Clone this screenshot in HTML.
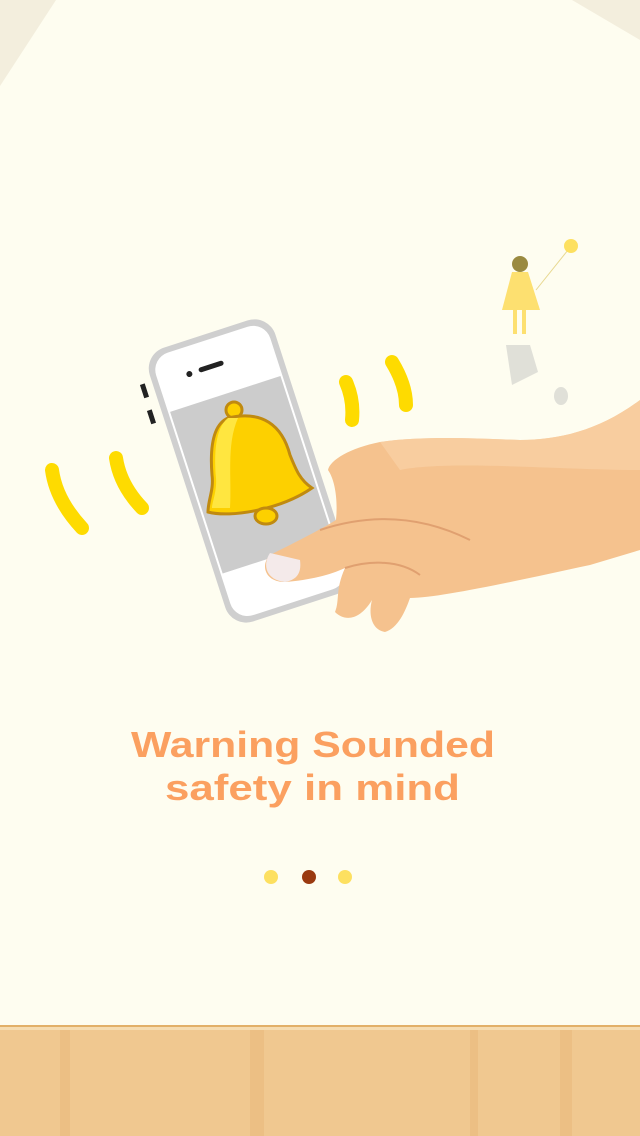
<html><head><style>body{margin:0;width:640px;height:1136px;overflow:hidden;background:#fefdf0;font-family:"Liberation Sans",sans-serif}</style></head><body>
<svg width="640" height="1136" style="position:absolute;left:0;top:0">
<rect width="640" height="1136" fill="#fefdf0"/>
<polygon points="0,0 56,0 0,86" fill="#f3eedd"/>
<polygon points="572,0 640,0 640,40" fill="#f3eedd"/>
<!-- girl -->
<ellipse cx="520" cy="264" rx="8" ry="8" fill="#9a8a40"/>
<polygon points="512,272 528,272 540,310 502,310" fill="#fde070"/>
<rect x="513" y="310" width="4" height="24" fill="#fde070"/><rect x="522" y="310" width="4" height="24" fill="#fde070"/>
<line x1="536" y1="290" x2="568" y2="250" stroke="#e8d890" stroke-width="1"/>
<circle cx="571" cy="246" r="7" fill="#fde060"/>
<polygon points="506,345 530,345 538,372 512,385" fill="#e0e0d8"/>
<ellipse cx="561" cy="396" rx="7" ry="9" fill="#e0e0d8"/>
<!-- waves -->
<g fill="none" stroke="#fedb00" stroke-width="14" stroke-linecap="round">
<path d="M52,470 Q56,500 82,528"/>
<path d="M116,458 Q120,485 142,508"/>
<path d="M346,382 Q354,400 352,420"/>
<path d="M392,362 Q406,385 406,405"/>
</g>
<!-- phone -->
<rect x="142" y="384" width="5" height="14" fill="#222" transform="rotate(-18 144 391)"/>
<rect x="149" y="410" width="5" height="14" fill="#222" transform="rotate(-18 151 417)"/>
<g transform="rotate(-18 250 470)">
<rect x="184" y="327" width="132" height="288" rx="22" fill="#cfcfcf"/>
<rect x="190" y="333" width="120" height="276" rx="18" fill="#fff"/>
<rect x="192" y="390" width="116" height="170" fill="#cccccc"/>
<circle cx="222" cy="360" r="3" fill="#222"/>
<rect x="232" y="357" width="26" height="5" rx="2.5" fill="#222"/>
</g>
<!-- bell -->
<g>
<circle cx="234" cy="410" r="8" fill="#fdd000" stroke="#c08a10" stroke-width="3"/>
<path d="M228,418 C212,425 210,450 212,475 C214,490 208,500 208,512 C230,518 280,510 312,488 C300,480 296,470 290,455 C282,425 262,410 228,418Z" fill="#fdd000" stroke="#c08a10" stroke-width="3"/>
<path d="M228,418 C215,428 214,455 216,478 C217,492 212,502 212,508 L230,508 C232,480 226,445 238,418Z" fill="#ffe640"/>
<ellipse cx="266" cy="516" rx="11" ry="8" fill="#fdd000" stroke="#c08a10" stroke-width="3"/>
</g>
<!-- hand -->
<path d="M640,400 C600,430 560,440 520,440 C470,438 420,436 380,442 C350,448 330,460 328,470 C335,480 338,500 336,520 C320,530 290,545 270,555 C260,565 265,582 285,582 C310,580 330,575 345,568 C335,590 340,600 335,612 C345,622 360,620 372,600 C368,615 372,630 385,632 C398,628 405,612 410,598 C440,598 520,580 590,565 L640,550Z" fill="#f5c28e"/>
<path d="M640,400 C600,430 560,440 520,440 C470,438 420,436 380,442 L400,470 C450,460 560,470 640,470Z" fill="#f9d2a6" opacity=".7"/>
<path d="M320,530 C380,510 430,520 470,540 M345,568 C370,560 400,560 420,575" fill="none" stroke="#e0a070" stroke-width="2"/>
<path d="M270,553 C262,565 266,580 285,582 C295,580 302,575 300,560 Z" fill="#f4eaea"/>
<!-- wood -->
<rect x="0" y="1025" width="640" height="111" fill="#f0c890"/>
<rect x="0" y="1025" width="640" height="2" fill="#e2b068"/>
<rect x="0" y="1027" width="640" height="3" fill="#f6dcb0"/>
<g fill="#e7b578" opacity=".5"><rect x="60" y="1030" width="10" height="106"/><rect x="250" y="1030" width="14" height="106"/><rect x="470" y="1030" width="8" height="106"/><rect x="560" y="1030" width="12" height="106"/></g>
<!-- dots -->
<circle cx="271" cy="877" r="7" fill="#fde060"/>
<circle cx="309" cy="877" r="7" fill="#9a3a10"/>
<circle cx="345" cy="877" r="7" fill="#fde060"/>
<text x="131" y="757" textLength="364" lengthAdjust="spacingAndGlyphs" font-family="Liberation Sans" font-weight="bold" font-size="36" fill="#fba060">Warning Sounded</text>
<text x="165" y="800" textLength="295" lengthAdjust="spacingAndGlyphs" font-family="Liberation Sans" font-weight="bold" font-size="36" fill="#fba060">safety in mind</text>
</svg>
</body></html>
